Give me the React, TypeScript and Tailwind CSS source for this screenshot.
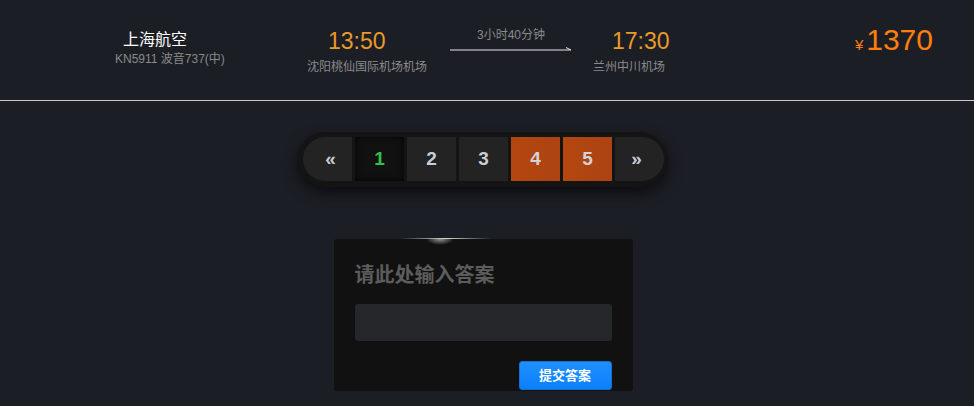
import React from "react";

const font = { fontFamily: '"Liberation Sans", "Noto Sans CJK SC", sans-serif' };

const pages = [
  { label: "«", kind: "nav" },
  { label: "1", kind: "active" },
  { label: "2", kind: "normal" },
  { label: "3", kind: "normal" },
  { label: "4", kind: "hot" },
  { label: "5", kind: "hot" },
  { label: "»", kind: "nav" },
];

function FlightRow() {
  return (
    <div className="relative h-[101px] border-b border-[#c9c9c9]">
      <div className="flex h-full">
        {/* airline */}
        <div className="w-[290px] pl-[115px] pt-[29px]">
          <div className="ml-[8px] text-[16px] leading-[22px] text-white">上海航空</div>
          <div className="text-[12px] leading-[16px] text-[#8a8a8a]">KN5911 波音737(中)</div>
        </div>

        {/* departure */}
        <div className="w-[140px] pl-[17px] pt-[28px]">
          <div className="ml-[21px] text-[23px] leading-[26px] text-[#e99a2a]">13:50</div>
          <div className="mt-[5px] text-[12px] leading-[16px] text-[#8a8a8a]">沈阳桃仙国际机场机场</div>
        </div>

        {/* duration */}
        <div className="ml-[20px] flex w-[122px] flex-col items-center pt-[27px]">
          <div className="text-[12px] leading-[16px] text-[#8a8a8a]">3小时40分钟</div>
          <svg width="122" height="6" viewBox="0 0 122 6" className="mt-[2px]">
            <line x1="0" y1="5" x2="121" y2="5" stroke="#e5e5e5" strokeWidth="1.2" />
            <line x1="116" y1="2.5" x2="121" y2="5" stroke="#e5e5e5" strokeWidth="1" />
          </svg>
        </div>

        {/* arrival */}
        <div className="ml-[21px] w-[120px] pt-[28px]">
          <div className="ml-[19px] text-[23px] leading-[26px] text-[#e99a2a]">17:30</div>
          <div className="mt-[5px] text-[12px] leading-[16px] text-[#8a8a8a]">兰州中川机场</div>
        </div>

        {/* price */}
        <div className="ml-auto mr-[41px] flex items-baseline pt-[22px] text-[#ff7f0e]">
          <span className="mr-[3px] text-[15px]">¥</span>
          <span className="text-[30px] leading-[36px]">1370</span>
        </div>
      </div>
    </div>
  );
}

function Pager() {
  return (
    <div className="flex justify-center pt-[30px]">
      <div className="ml-[-9px] flex gap-[3px] rounded-full bg-[#141414] py-[6px] pl-[6px] pr-[4px] shadow-[0_6px_14px_rgba(0,0,0,0.55),inset_0_1px_0_rgba(255,255,255,0.04)]">
        {pages.map((p, i) => {
          let cls = "bg-[#232323] text-[#c9cdd6]";
          if (p.kind === "active") cls = "bg-[#101110] text-[#2fc24a] shadow-[inset_0_0_6px_rgba(0,0,0,0.9)]";
          if (p.kind === "hot") cls = "bg-gradient-to-r from-[#b4470f] to-[#ad4313] text-[#d4d4d8]";
          const round = i === 0 ? "rounded-l-full pl-[6px]" : i === pages.length - 1 ? "rounded-r-full pr-[6px]" : "";
          return (
            <div
              key={p.label}
              className={`flex h-[44px] w-[49px] items-center justify-center text-[19px] font-bold ${cls} ${round}`}
            >
              {p.label}
            </div>
          );
        })}
      </div>
    </div>
  );
}

function AnswerCard() {
  return (
    <div className="flex justify-center pt-[52px]">
      <div className="relative ml-[-8px] w-[299px] rounded-[3px] bg-[#111111] px-[21px] pt-[22px] pb-[1px]">
        <div className="absolute left-[66px] top-[-1px] h-px w-[92px] bg-gradient-to-r from-transparent via-[#d8d8d8] to-transparent" />
        <div className="absolute left-[92px] top-0 h-[6px] w-[28px] rounded-full bg-[radial-gradient(ellipse_at_top,rgba(255,255,255,0.55),transparent_70%)]" />
        <div className="text-[20px] font-bold leading-[28px] text-[#5c5c5c]">请此处输入答案</div>
        <div className="mt-[15px] h-[37px] rounded-[3px] bg-[#26272b]" />
        <div className="mt-[20px] flex justify-end">
          <button className="h-[29px] w-[93px] rounded-[3px] border border-[#1b6fd0] bg-gradient-to-b from-[#1e8fff] to-[#0a80fb] text-[13px] font-bold text-white">
            提交答案
          </button>
        </div>
      </div>
    </div>
  );
}

export default function App() {
  return (
    <div className="min-h-[406px] w-full bg-[#1c1e25]" style={font}>
      <FlightRow />
      <Pager />
      <AnswerCard />
    </div>
  );
}
